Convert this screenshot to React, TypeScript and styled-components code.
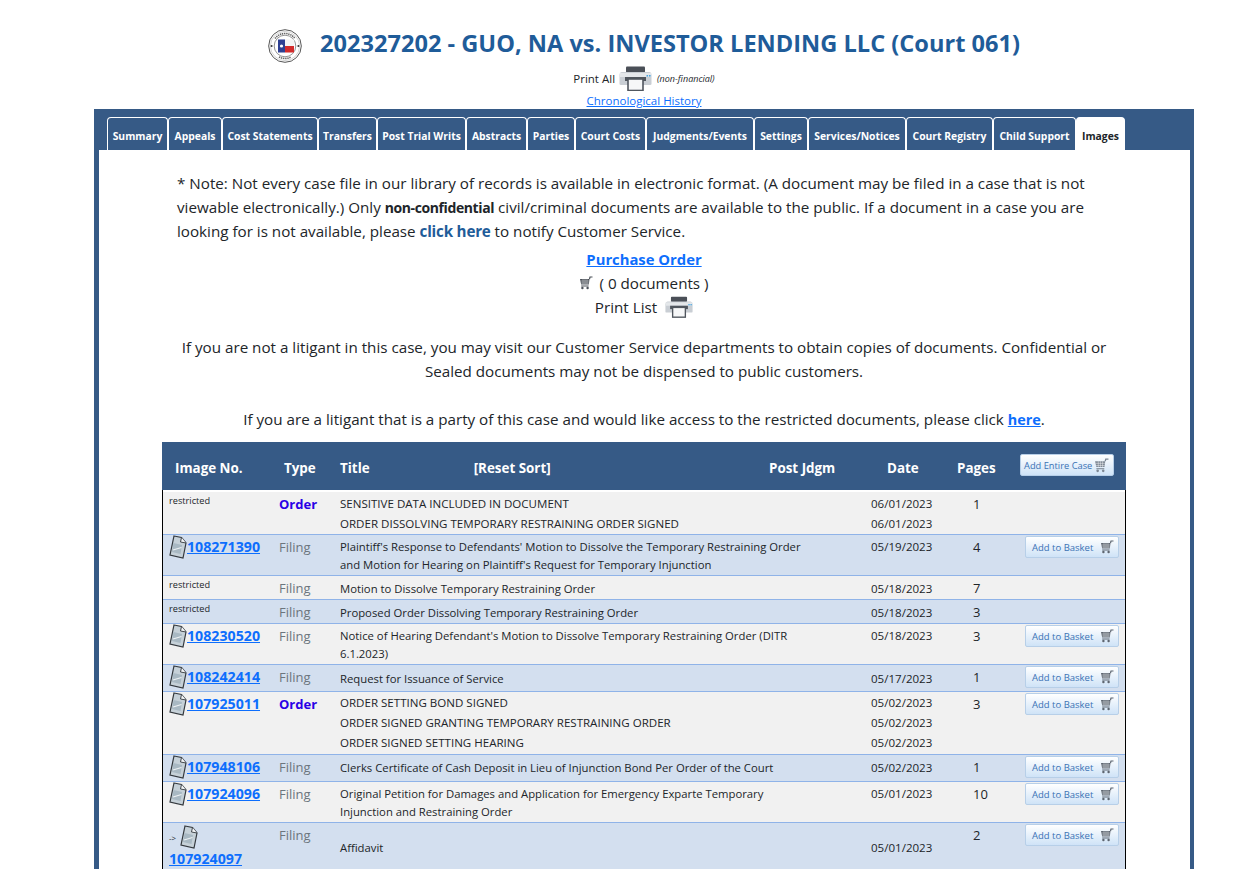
import React from 'react';
import styled, { createGlobalStyle } from 'styled-components';

const navy = '#365a86';
const linkBlue = '#0d6efd';
const fontStack = '"Open Sans", "Noto Sans", "Liberation Sans", sans-serif';

const GlobalStyle = createGlobalStyle`
  html, body { margin: 0; padding: 0; background: #fff; }
  body { font-family: ${fontStack}; color: #212529; height: 869px; overflow: hidden; }
  * { box-sizing: border-box; }
`;

const Page = styled.div`
  width: 1260px;
  height: 869px;
  overflow: hidden;
`;

const Header = styled.header`
  height: 109px;
  padding-left: 28px;
  display: flex;
  flex-direction: column;
  align-items: center;
`;

const TitleRow = styled.div`
  display: flex;
  align-items: center;
  gap: 18px;
  height: 66px;
  padding-top: 20px;
`;

const SealBox = styled.div`
  display: flex;
  margin-top: 6px;
`;

const CaseTitle = styled.h1`
  margin: 0;
  font-size: 23.6px;
  font-weight: 700;
  color: #1f5c99;
  white-space: nowrap;
`;

const PrintAllRow = styled.div`
  display: flex;
  align-items: center;
  gap: 4px;
  height: 25px;
  margin-bottom: 2px;
  font-size: 11.5px;
`;

const NonFinancial = styled.span`
  font-size: 9px;
  font-style: italic;
  margin-left: 1px;
`;

const HistoryLink = styled.a`
  font-size: 11.5px;
  color: ${linkBlue};
  text-decoration: underline;
  line-height: 16px;
`;

const Panel = styled.section`
  width: 1100px;
  height: 760px;
  margin-left: 94px;
  background: ${navy};
  padding: 8px 4px 0 5px;
`;

const TabBar = styled.nav`
  display: flex;
  height: 33px;
  padding-left: 8px;
`;

const Tab = styled.div<{ $active?: boolean; $w: number }>`
  width: ${p => p.$w}px;
  height: 33px;
  padding-top: 11px;
  font-size: 10.35px;
  font-weight: 700;
  text-align: center;
  white-space: nowrap;
  border: 1px solid #fff;
  border-bottom: 0;
  border-radius: 4px 4px 0 0;
  color: ${p => (p.$active ? '#212529' : '#fff')};
  background: ${p => (p.$active ? '#fff' : navy)};
`;

const Content = styled.div`
  background: #fff;
  height: 719px;
  padding: 21px 0 0 63px;
`;

const Notice = styled.div`
  width: 964px;
  font-size: 15.2px;
  line-height: 24px;
  text-align: center;
  white-space: nowrap;
`;

const NoteText = styled.p`
  margin: 0 0 4px;
  padding-left: 15px;
  text-align: left;
`;

const Strong = styled.strong`
  font-size: 14px;
  font-weight: 700;
  letter-spacing: -0.4px;
  line-height: 0;
`;

const NoteLink = styled.a`
  color: #1f5c99;
  font-weight: 700;
  letter-spacing: -0.2px;
`;

const PurchaseLink = styled.a`
  display: block;
  font-size: 14.8px;
  color: ${linkBlue};
  font-weight: 700;
  text-decoration: underline;
`;

const IconLine = styled.div<{ $gap: number }>`
  display: flex;
  justify-content: center;
  align-items: center;
  gap: ${p => p.$gap}px;
  height: 24px;
`;

const Paragraph = styled.p<{ $gap?: number }>`
  margin: ${p => p.$gap ?? 0}px 0 0;
`;

const BoldLink = styled.a`
  font-size: 14.4px;
  line-height: 0;
  color: ${linkBlue};
  font-weight: 700;
  text-decoration: underline;
`;

const Table = styled.div`
  margin-top: 11px;
  width: 964px;
  border-left: 1px solid #000;
  border-right: 1px solid #000;
`;

const gridCols = '112px 61px 433px 102px 86px 63px 1fr';

const HeadRow = styled.div`
  height: 48px;
  margin: 0 -1px 2px;
  padding: 4px 0 0 1px;
  background: ${navy};
  color: #fff;
  display: grid;
  grid-template-columns: ${gridCols};
  align-items: center;
  font-size: 13.4px;
  font-weight: 700;
`;

const HeadCell = styled.div<{ $pad?: number }>`
  padding-left: ${p => p.$pad ?? 0}px;
  white-space: nowrap;
  display: flex;
`;

const HeadButtonCell = styled(HeadCell)`
  margin-top: -6px;
`;

const ResetSort = styled.span`
  margin-left: 104px;
`;

const Row = styled.div<{ $tone: 'light' | 'blue'; $h: number }>`
  height: ${p => p.$h}px;
  display: grid;
  grid-template-columns: ${gridCols};
  background: ${p => (p.$tone === 'blue' ? '#d3dfef' : '#f1f1f1')};
  border-bottom: 1px solid #8fb3e8;
  font-size: 11.55px;
  overflow: hidden;
`;

const ImageCell = styled.div`
  padding-left: 6px;
`;

const Restricted = styled.span`
  display: block;
  font-size: 9.2px;
  line-height: 14px;
  margin-top: 2px;
`;

const CaseLink = styled.a<{ $short?: boolean }>`
  display: inline-flex;
  align-items: center;
  color: ${linkBlue};
  font-size: 14.2px;
  font-weight: 700;
  line-height: ${p => (p.$short ? 20 : 24)}px;
`;

const Underlined = styled.span`
  text-decoration: underline;
`;

const AttachedLine = styled.div`
  display: flex;
  align-items: center;
  gap: 4px;
  height: 24px;
  margin-top: 2px;
`;

const BackArrow = styled.span`
  font-size: 8px;
`;

const TypeCell = styled.div<{ $order?: boolean }>`
  padding-left: 4px;
  font-size: 13px;
  line-height: 24px;
  font-weight: ${p => (p.$order ? 700 : 400)};
  color: ${p => (p.$order ? '#2a00e6' : '#6c757d')};
`;

const TitleCell = styled.div<{ $top: number; $caps?: boolean }>`
  grid-column: 3 / span 2;
  padding: ${p => p.$top}px 0 0 4px;
  font-size: ${p => (p.$caps ? 11.55 : 11.3)}px;
  white-space: nowrap;
`;

const Line = styled.div<{ $lh: number }>`
  line-height: ${p => p.$lh}px;
  min-height: ${p => p.$lh}px;
`;

const DateCell = styled.div<{ $top: number }>`
  grid-column: 5;
  padding-top: ${p => p.$top}px;
`;

const PagesCell = styled.div`
  padding-left: 16px;
  font-size: 13px;
  line-height: 24px;
`;

const BasketCell = styled.div`
  padding: 1px 0 0 5px;
`;

const BasketButton = styled.button<{ $head?: boolean }>`
  display: inline-flex;
  align-items: center;
  justify-content: space-between;
  width: 94px;
  height: 22px;
  padding: 0 4px 0 ${p => (p.$head ? 3 : 6)}px;
  border: 1px solid #b7cfe8;
  border-radius: 2px;
  font-family: ${fontStack};
  font-size: ${p => (p.$head ? 9.3 : 9.5)}px;
  color: #3a72b5;
  background: linear-gradient(#ffffff, #cfe3f7);
  white-space: nowrap;
`;

const Printer = ({ w, h }: { w: number; h: number }) => (
  <svg width={w} height={h} viewBox="0 0 33 25" aria-hidden>
    <rect x="7" y="0.5" width="19" height="6" rx="1" fill="#4a4f57" />
    <path d="M3 6 H30 Q32.5 6 32.5 9 V18 Q32.5 19 31 19 H2 Q0.5 19 0.5 18 V9 Q0.5 6 3 6Z" fill="#c9ced4" />
    <path d="M1 7 H32 V11 H1Z" fill="#e4e7ea" />
    <rect x="6" y="11" width="21" height="4" fill="#50565e" />
    <rect x="9" y="13" width="15" height="11.5" fill="#f6f7f8" stroke="#50565e" strokeWidth="1.6" />
    <rect x="27.5" y="9" width="1.6" height="1.6" fill="#4aa3df" />
    <rect x="30" y="9" width="1.6" height="1.6" fill="#4aa3df" />
  </svg>
);

const Cart = ({ size = 14, color = '#5d6570' }: { size?: number; color?: string }) => (
  <svg width={size} height={size} viewBox="0 0 14 14" aria-hidden>
    <path d="M1 3 H10.5 L9.8 8.5 H2.2Z" fill={color} />
    <path d="M10.5 3 L11 1 H13.5" fill="none" stroke={color} strokeWidth="1.2" />
    <path d="M2.2 10 H9.6" stroke={color} strokeWidth="1" />
    <circle cx="3.4" cy="12" r="1.2" fill={color} />
    <circle cx="8.6" cy="12" r="1.2" fill={color} />
    <path d="M4 3V8.5M6 3V8.5M8 3V8.5M1.5 5H10.2M1.9 7H10" stroke="#fff" strokeWidth="0.4" />
  </svg>
);

const DocIcon = () => (
  <svg width="18" height="24" viewBox="0 0 18 24" aria-hidden>
    <path d="M5 1 L12.5 2.5 L17 8 L14 23 L1 20Z" fill="#c6d1d8" stroke="#33383d" strokeWidth="1.2" />
    <path d="M12.5 2.5 L11.5 7 L17 8" fill="#f4f6f7" stroke="#33383d" strokeWidth="0.9" />
    <path d="M4.5 8 L13 10 L11.5 19 L3 17Z" fill="#a9b9c3" />
    <path d="M4 15 L12.5 12.5" stroke="#eef2f4" strokeWidth="1.2" />
  </svg>
);

const Seal = () => (
  <svg width="34" height="34" viewBox="0 0 34 34" aria-hidden>
    <circle cx="17" cy="17" r="16.3" fill="#fff" stroke="#555" strokeWidth="1" />
    <circle cx="17" cy="17" r="14.6" fill="none" stroke="#aaa" strokeWidth="0.5" />
    <circle cx="17" cy="17" r="10.8" fill="#fff" stroke="#666" strokeWidth="0.7" />
    <rect x="10" y="10.5" width="7" height="13" fill="#2d3f92" />
    <rect x="17" y="10.5" width="9" height="6.5" fill="#f4f4f4" />
    <rect x="17" y="17" width="9" height="6.5" fill="#d22b2b" />
    <circle cx="13.5" cy="17" r="1.6" fill="#fff" />
    <circle cx="3.6" cy="17" r="1" fill="#333" />
    <circle cx="30.4" cy="17" r="1" fill="#333" />
    <path d="M7 9.5 A12.5 12.5 0 0 1 27 9.5" fill="none" stroke="#666" strokeWidth="1.6" strokeDasharray="1.4 0.7" />
    <path d="M11 28 A13 13 0 0 0 23 28" fill="none" stroke="#666" strokeWidth="1.6" strokeDasharray="1.4 0.7" />
  </svg>
);

const tabs: [string, number][] = [
  ['Summary', 61], ['Appeals', 54], ['Cost Statements', 96], ['Transfers', 59], ['Post Trial Writs', 89],
  ['Abstracts', 61], ['Parties', 48], ['Court Costs', 71], ['Judgments/Events', 108], ['Settings', 54],
  ['Services/Notices', 98], ['Court Registry', 87], ['Child Support', 83],
];

interface DocRow {
  image?: string;
  restricted?: boolean;
  attached?: boolean;
  type: 'Order' | 'Filing';
  titles: string[];
  dates: string[];
  pages: string;
  height: number;
  tone: 'light' | 'blue';
  lineHeight: number;
  top: number;
}

const rows: DocRow[] = [
  { restricted: true, type: 'Order', titles: ['SENSITIVE DATA INCLUDED IN DOCUMENT', 'ORDER DISSOLVING TEMPORARY RESTRAINING ORDER SIGNED'], dates: ['06/01/2023', '06/01/2023'], pages: '1', height: 43, tone: 'light', lineHeight: 20, top: 2 },
  { image: '108271390', type: 'Filing', titles: ["Plaintiff's Response to Defendants' Motion to Dissolve the Temporary Restraining Order", "and Motion for Hearing on Plaintiff's Request for Temporary Injunction"], dates: ['05/19/2023'], pages: '4', height: 41, tone: 'blue', lineHeight: 18, top: 3 },
  { restricted: true, type: 'Filing', titles: ['Motion to Dissolve Temporary Restraining Order'], dates: ['05/18/2023'], pages: '7', height: 24, tone: 'light', lineHeight: 20, top: 3 },
  { restricted: true, type: 'Filing', titles: ['Proposed Order Dissolving Temporary Restraining Order'], dates: ['05/18/2023'], pages: '3', height: 24, tone: 'blue', lineHeight: 20, top: 3 },
  { image: '108230520', type: 'Filing', titles: ["Notice of Hearing Defendant's Motion to Dissolve Temporary Restraining Order (DITR", '6.1.2023)'], dates: ['05/18/2023'], pages: '3', height: 41, tone: 'light', lineHeight: 18, top: 3 },
  { image: '108242414', type: 'Filing', titles: ['Request for Issuance of Service'], dates: ['05/17/2023'], pages: '1', height: 27, tone: 'blue', lineHeight: 20, top: 4 },
  { image: '107925011', type: 'Order', titles: ['ORDER SETTING BOND SIGNED', 'ORDER SIGNED GRANTING TEMPORARY RESTRAINING ORDER', 'ORDER SIGNED SETTING HEARING'], dates: ['05/02/2023', '05/02/2023', '05/02/2023'], pages: '3', height: 63, tone: 'light', lineHeight: 20, top: 1 },
  { image: '107948106', type: 'Filing', titles: ['Clerks Certificate of Cash Deposit in Lieu of Injunction Bond Per Order of the Court'], dates: ['05/02/2023'], pages: '1', height: 27, tone: 'blue', lineHeight: 20, top: 3 },
  { image: '107924096', type: 'Filing', titles: ['Original Petition for Damages and Application for Emergency Exparte Temporary', 'Injunction and Restraining Order'], dates: ['05/01/2023'], pages: '10', height: 41, tone: 'light', lineHeight: 18, top: 3 },
  { image: '107924097', attached: true, type: 'Filing', titles: ['Affidavit'], dates: ['05/01/2023'], pages: '2', height: 60, tone: 'blue', lineHeight: 20, top: 15 },
];

export default function App() {
  return (
    <Page>
      <GlobalStyle />
      <Header>
        <TitleRow>
          <SealBox><Seal /></SealBox>
          <CaseTitle>202327202 - GUO, NA vs. INVESTOR LENDING LLC (Court 061)</CaseTitle>
        </TitleRow>
        <PrintAllRow>
          Print All <Printer w={33} h={25} />
          <NonFinancial>(non-financial)</NonFinancial>
        </PrintAllRow>
        <HistoryLink>Chronological History</HistoryLink>
      </Header>
      <Panel>
        <TabBar>
          {tabs.map(([label, w]) => <Tab key={label} $w={w}>{label}</Tab>)}
          <Tab $active $w={49}>Images</Tab>
        </TabBar>
        <Content>
          <Notice>
            <NoteText>
              * Note: Not every case file in our library of records is available in electronic format. (A document may be filed in a case that is not<br />
              viewable electronically.) Only <Strong>non-confidential</Strong> civil/criminal documents are available to the public. If a document in a case you are<br />
              looking for is not available, please <NoteLink>click here</NoteLink> to notify Customer Service.
            </NoteText>
            <PurchaseLink>Purchase Order</PurchaseLink>
            <IconLine $gap={6}><Cart color="#4a5058" /> ( 0 documents )</IconLine>
            <IconLine $gap={8}>Print List <Printer w={28} h={22} /></IconLine>
            <Paragraph $gap={16}>
              If you are not a litigant in this case, you may visit our Customer Service departments to obtain copies of documents. Confidential or<br />
              Sealed documents may not be dispensed to public customers.
            </Paragraph>
            <Paragraph $gap={24}>
              If you are a litigant that is a party of this case and would like access to the restricted documents, please click <BoldLink>here</BoldLink>.
            </Paragraph>
          </Notice>
          <Table>
            <HeadRow>
              <HeadCell $pad={12}>Image No.</HeadCell>
              <HeadCell $pad={9}>Type</HeadCell>
              <HeadCell $pad={4}>Title<ResetSort>[Reset Sort]</ResetSort></HeadCell>
              <HeadCell>Post Jdgm</HeadCell>
              <HeadCell $pad={16}>Date</HeadCell>
              <HeadCell>Pages</HeadCell>
              <HeadButtonCell><BasketButton $head>Add Entire Case <Cart size={15} color="#7d8794" /></BasketButton></HeadButtonCell>
            </HeadRow>
            {rows.map((r, i) => (
              <Row key={i} $tone={r.tone} $h={r.height}>
                <ImageCell>
                  {r.restricted && <Restricted>restricted</Restricted>}
                  {r.image && !r.attached && (
                    <CaseLink><DocIcon /><Underlined>{r.image}</Underlined></CaseLink>
                  )}
                  {r.attached && (
                    <>
                      <AttachedLine><BackArrow>-&gt;</BackArrow><DocIcon /></AttachedLine>
                      <CaseLink $short><Underlined>{r.image}</Underlined></CaseLink>
                    </>
                  )}
                </ImageCell>
                <TypeCell $order={r.type === 'Order'}>{r.type}</TypeCell>
                <TitleCell $top={r.top} $caps={r.type === 'Order'}>
                  {r.titles.map(t => <Line key={t} $lh={r.lineHeight}>{t}</Line>)}
                </TitleCell>
                <DateCell $top={r.top}>
                  {r.dates.map((d, j) => <Line key={j} $lh={r.lineHeight}>{d}</Line>)}
                </DateCell>
                <PagesCell>{r.pages}</PagesCell>
                <BasketCell>
                  {r.image && <BasketButton>Add to Basket <Cart /></BasketButton>}
                </BasketCell>
              </Row>
            ))}
          </Table>
        </Content>
      </Panel>
    </Page>
  );
}
